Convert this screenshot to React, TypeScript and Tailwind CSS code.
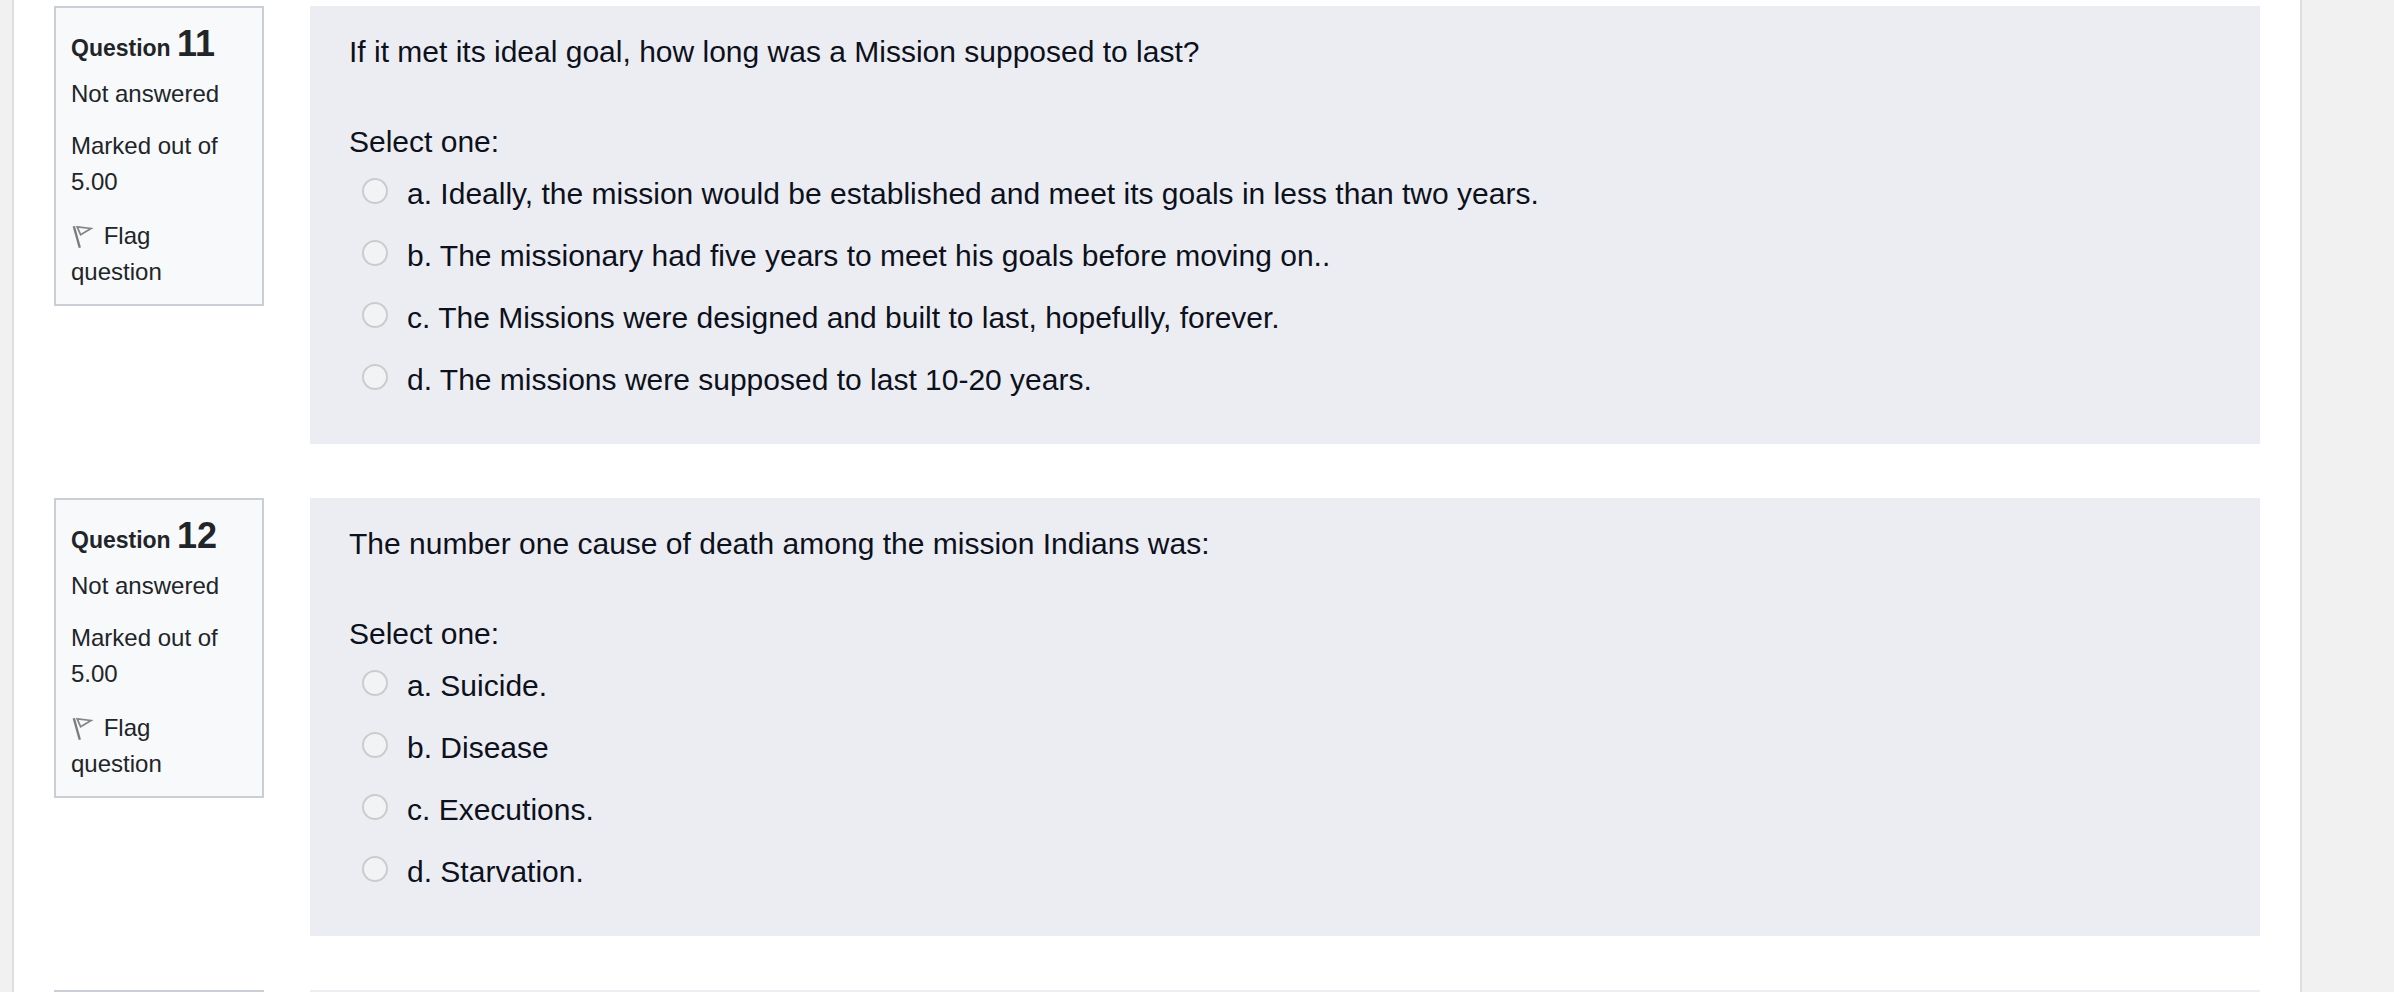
import { useState } from "react";

type Question = {
  number: number;
  text: string;
  options: string[];
};

const questions: Question[] = [
  {
    number: 11,
    text: "If it met its ideal goal, how long was a Mission supposed to last?",
    options: [
      "Ideally, the mission would be established and meet its goals in less than two years.",
      "The missionary had five years to meet his goals before moving on..",
      "The Missions were designed and built to last, hopefully, forever.",
      "The missions were supposed to last 10-20 years.",
    ],
  },
  {
    number: 12,
    text: "The number one cause of death among the mission Indians was:",
    options: ["Suicide.", "Disease", "Executions.", "Starvation."],
  },
];

function FlagIcon() {
  return (
    <svg viewBox="0 0 24 24" className="mr-0.5 inline-block h-6 w-6 align-[-5px]" fill="none" aria-hidden="true">
      <path d="M2.8 1.2 8.8 22.8" stroke="#7d7d7d" strokeWidth="2.4" />
      <path d="M6.2 1.9 20 3.5 9.6 9.7Z" stroke="#858585" strokeWidth="1.7" />
    </svg>
  );
}

function QuestionInfo({ number }: { number: number }) {
  return (
    <div className="w-[210px] shrink-0 border-2 border-[#cacfd6] bg-[#f8f9fb] pt-[18px] pr-6 pb-[14px] pl-[15px] text-2xl leading-[36px] text-[#212529]">
      <h3 className="mb-[10px] text-[23px] leading-[36px] font-bold">
        Question <span className="text-4xl leading-[36px]">{number}</span>
      </h3>
      <div className="mb-4">Not answered</div>
      <div className="mb-[18px]">Marked out of 5.00</div>
      <button type="button" className="block text-left">
        <FlagIcon /> Flag question
      </button>
    </div>
  );
}

function QuestionBlock({ question }: { question: Question }) {
  const [selected, setSelected] = useState<number | null>(null);

  return (
    <div className="flex items-start gap-[46px]">
      <QuestionInfo number={question.number} />
      <div className="flex-1 bg-[#ecedf3] px-[39px] pt-[23px] pb-[42px] text-[30px] leading-[45px] text-[#0d111b]">
        <p className="mb-[45px]">{question.text}</p>
        <fieldset>
          <legend className="mb-[7px]">Select one:</legend>
          <div className="flex flex-col gap-[17px] pl-[13px]">
            {question.options.map((option, i) => (
              <label key={option} className="flex items-start gap-[19px]">
                <input
                  type="radio"
                  name={`q${question.number}`}
                  checked={selected === i}
                  onChange={() => setSelected(i)}
                  className="mt-[7px] size-[26px] shrink-0 appearance-none rounded-full border-2 border-[#cbcccd] bg-[#f2f3f5] checked:border-8 checked:border-blue-500"
                />
                <span>
                  {"abcd"[i]}. {option}
                </span>
              </label>
            ))}
          </div>
        </fieldset>
      </div>
    </div>
  );
}

export default function App() {
  return (
    <div className="min-h-screen bg-[#f1f1f1] pl-3 pr-[92px] font-['Helvetica_Neue','Liberation_Sans',Arial,sans-serif]">
      <main className="flex min-h-screen flex-col gap-[54px] border-x-2 border-[#dedede] bg-white px-10 pt-[6px]">
        {questions.map((q) => (
          <QuestionBlock key={q.number} question={q} />
        ))}
        {/* top edge of the next question */}
        <div className="flex gap-[46px]">
          <div className="w-[210px] shrink-0 border-t-2 border-[#cacfd6]" />
          <div className="h-[2px] flex-1 bg-[#eeedf4]" />
        </div>
      </main>
    </div>
  );
}
